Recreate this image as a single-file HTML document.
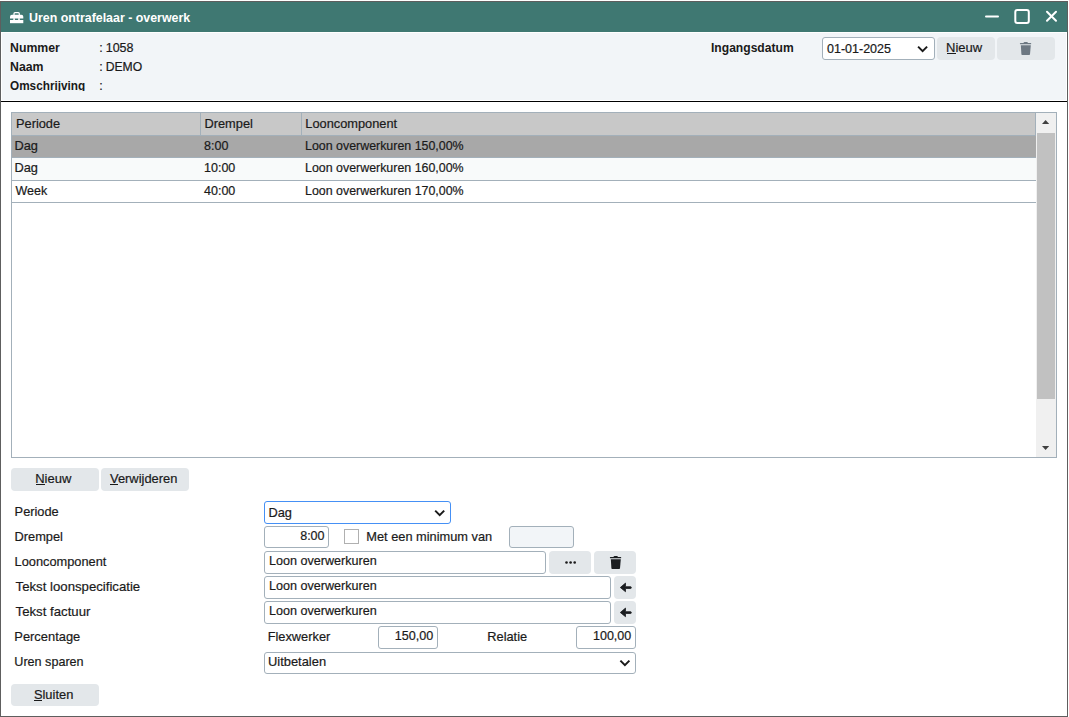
<!DOCTYPE html>
<html><head><meta charset="utf-8">
<style>
html,body{margin:0;padding:0;background:#fff;width:1069px;height:717px;overflow:hidden;}
body{position:relative;font-family:"Liberation Sans",sans-serif;color:#1a1a1a;}
.a{position:absolute;}
.t{position:absolute;white-space:nowrap;font-size:12.8px;line-height:15px;-webkit-text-stroke:0.2px #1a1a1a;}
.b{-webkit-text-stroke:0;}
.b{font-weight:bold;font-size:12.3px;}
#win{left:0;top:1px;width:1068px;height:716px;box-sizing:border-box;border:1px solid #5e5e5e;background:#fff;}
#title{left:1px;top:2px;width:1066px;height:30px;background:#3f7872;}
#hdr{left:1px;top:32px;width:1066px;height:69px;box-sizing:border-box;border:1px solid #fff;background:#f2f5f8;overflow:hidden;}
#hline{left:1px;top:101px;width:1066px;height:1px;background:#000;}
.btn{position:absolute;background:#e3e7ea;border-radius:4px;}
.inp{position:absolute;box-sizing:border-box;border:1px solid #a3b0ba;border-radius:3px;background:#fff;}
u{text-decoration:none;}
.ul{position:absolute;height:1px;background:#1a1a1a;}
</style></head><body>
<div id="win" class="a"></div>
<div id="title" class="a"></div>
<!-- title icon -->
<svg class="a" style="left:10px;top:12px" width="14" height="12" viewBox="0 0 14 12">
  <path d="M3.4 3 V1.6 Q3.4 0 5 0 H8.3 Q9.9 0 9.9 1.6 V3 H8.7 V1.7 Q8.7 1.3 8.3 1.3 H5 Q4.6 1.3 4.6 1.7 V3 Z" fill="#fff"/>
  <path d="M0 4.8 Q0 2.8 2 2.8 H11.3 Q13.3 2.8 13.3 4.8 V6.5 H0 Z" fill="#fff"/>
  <rect x="0" y="8" width="13.3" height="3.2" fill="#fff"/>
  <rect x="3.3" y="6.2" width="1.6" height="2.2" fill="#fff"/>
  <rect x="8.2" y="6.2" width="1.6" height="2.2" fill="#fff"/>
</svg>
<div class="t b" style="left:29px;top:11px;color:#fff;font-size:12.4px;">Uren ontrafelaar - overwerk</div>
<!-- window controls -->
<svg class="a" style="left:980px;top:4px" width="85" height="26" viewBox="0 0 85 26">
  <line x1="6" y1="12.5" x2="18" y2="12.5" stroke="#fff" stroke-width="2" stroke-linecap="round"/>
  <rect x="35.3" y="6" width="13.5" height="13" rx="2" ry="2" fill="none" stroke="#fff" stroke-width="2"/>
  <line x1="67" y1="7.8" x2="76" y2="16.8" stroke="#fff" stroke-width="2" stroke-linecap="round"/>
  <line x1="76" y1="7.8" x2="67" y2="16.8" stroke="#fff" stroke-width="2" stroke-linecap="round"/>
</svg>

<div id="hdr" class="a"></div>
<div class="a" style="left:0;top:33px;width:1066px;height:58px;overflow:hidden;">
  <div class="t b" style="left:10px;top:8px;">Nummer</div>
  <div class="t b" style="left:10px;top:27px;">Naam</div>
  <div class="t b" style="left:10px;top:46px;transform:scaleX(0.957);transform-origin:0 0;">Omschrijving</div>
  <div class="t" style="left:99.2px;top:8px;font-size:12.5px;">:</div>
  <div class="t" style="left:105.7px;top:8px;font-size:12.5px;">1058</div>
  <div class="t" style="left:99.2px;top:27px;font-size:12.5px;">:</div>
  <div class="t" style="left:105.7px;top:27px;font-size:12.2px;">DEMO</div>
  <div class="t" style="left:99.2px;top:46px;font-size:12.5px;">:</div>
</div>
<div class="t b" style="left:711px;top:41px;font-size:12.1px;">Ingangsdatum</div>
<div class="inp" style="left:822px;top:37px;width:113px;height:23px;"></div>
<div class="t" style="left:827px;top:42px;font-size:12.5px;">01-01-2025</div>
<svg class="a" style="left:916px;top:44px" width="14" height="10" viewBox="0 0 14 10"><path d="M2.1 2.6 L6.6 7.1 L11.1 2.6" fill="none" stroke="#1a1a1a" stroke-width="2"/></svg>
<div class="btn" style="left:937px;top:37px;width:58px;height:23px;"></div>
<div class="t" style="left:946px;top:40px;font-size:13px;"><u>N</u>ieuw</div>
<div class="ul" style="left:947px;top:53px;width:9px;"></div>
<div class="btn" style="left:997px;top:37px;width:58px;height:23px;"></div>
<svg class="a" style="left:1019px;top:41px" width="14" height="15" viewBox="0 0 14 15">
  <path d="M4.4 2.2 Q4.6 1 5.6 1 H7.8 Q8.8 1 9 2.2 Z" fill="#6d7882"/>
  <rect x="0.9" y="2" width="11.3" height="1.25" rx="0.6" fill="#6d7882"/>
  <path d="M1.8 4.3 H11.8 L11 13.2 Q10.9 13.9 10.2 13.9 H3.2 Q2.5 13.9 2.4 13.2 Z" fill="#6d7882"/>
</svg>
<div id="hline" class="a"></div>

<!-- table -->
<div class="a" style="left:11px;top:112px;width:1046px;height:346px;box-sizing:border-box;border:1px solid #a3b0ba;background:#fff;"></div>
<div class="a" style="left:12px;top:113px;width:1023px;height:22px;background:#c8c8c8;border-right:1px solid #a3b0ba;border-bottom:1px solid #a3b0ba;"></div>
<div class="a" style="left:200px;top:113px;width:1px;height:22px;background:#a3b0ba;"></div>
<div class="a" style="left:301px;top:113px;width:1px;height:22px;background:#a3b0ba;"></div>
<div class="a" style="left:12px;top:136px;width:1024px;height:22px;background:#a8a8a8;"></div>
<div class="a" style="left:12px;top:157px;width:1024px;height:1px;background:#a3b0ba;"></div>
<div class="a" style="left:12px;top:158px;width:1024px;height:22px;background:#f8fafa;"></div>
<div class="a" style="left:12px;top:180px;width:1024px;height:1px;background:#a3b0ba;"></div>
<div class="a" style="left:12px;top:202px;width:1024px;height:1px;background:#a3b0ba;"></div>
<div class="t" style="left:16px;top:116px;">Periode</div>
<div class="t" style="left:204.5px;top:116px;">Drempel</div>
<div class="t" style="left:305.3px;top:116px;">Looncomponent</div>
<div class="t" style="left:14.5px;top:138px;">Dag</div>
<div class="t" style="left:204px;top:139px;font-size:12.5px;">8:00</div>
<div class="t" style="left:305px;top:139px;font-size:12.42px;">Loon overwerkuren 150,00%</div>
<div class="t" style="left:14.5px;top:160px;">Dag</div>
<div class="t" style="left:204px;top:161px;font-size:12.5px;">10:00</div>
<div class="t" style="left:305px;top:161px;font-size:12.42px;">Loon overwerkuren 160,00%</div>
<div class="t" style="left:15.5px;top:184px;font-size:12.5px;">Week</div>
<div class="t" style="left:204px;top:184px;font-size:12.5px;">40:00</div>
<div class="t" style="left:305px;top:184px;font-size:12.42px;">Loon overwerkuren 170,00%</div>
<!-- scrollbar -->
<div class="a" style="left:1036px;top:113px;width:20px;height:344px;background:#f0f0f0;"></div>
<div class="a" style="left:1037px;top:133px;width:18px;height:266px;background:#c1c1c1;"></div>
<svg class="a" style="left:1041px;top:119px" width="10" height="6" viewBox="0 0 10 6"><path d="M1 5 L4.6 1 L8.2 5 Z" fill="#404040"/></svg>
<svg class="a" style="left:1041px;top:445px" width="10" height="6" viewBox="0 0 10 6"><path d="M1 1 L4.6 5 L8.2 1 Z" fill="#404040"/></svg>

<!-- buttons -->
<div class="btn" style="left:11px;top:468px;width:88px;height:23px;"></div>
<div class="t" style="left:35.2px;top:471px;font-size:13px;"><u>N</u>ieuw</div>
<div class="ul" style="left:36px;top:484px;width:9px;"></div>
<div class="btn" style="left:101px;top:468px;width:88px;height:23px;"></div>
<div class="t" style="left:110px;top:471px;font-size:12.9px;"><u>V</u>erwijderen</div>
<div class="ul" style="left:110px;top:484px;width:8px;"></div>

<!-- form -->
<div class="t" style="left:14.6px;top:504px;">Periode</div>
<div class="t" style="left:14.6px;top:529px;">Drempel</div>
<div class="t" style="left:14.6px;top:554px;">Looncomponent</div>
<div class="t" style="left:15.6px;top:579px;font-size:13.2px;">Tekst loonspecificatie</div>
<div class="t" style="left:15.6px;top:604px;font-size:13.2px;">Tekst factuur</div>
<div class="t" style="left:14.3px;top:629px;font-size:12.9px;">Percentage</div>
<div class="t" style="left:14.3px;top:655px;font-size:12.6px;">Uren sparen</div>

<div class="inp" style="left:264px;top:501px;width:187px;height:23px;border-color:#4590f5;border-radius:3px;"></div>
<div class="t" style="left:268.5px;top:505px;">Dag</div>
<svg class="a" style="left:432px;top:507px" width="14" height="10" viewBox="0 0 14 10"><path d="M3.2 3.6 L7.7 8.1 L12.2 3.6" fill="none" stroke="#1a1a1a" stroke-width="2"/></svg>

<div class="inp" style="left:264px;top:526px;width:65px;height:22px;"></div>
<div class="t" style="left:300.2px;top:529px;font-size:12.5px;">8:00</div>
<div class="a" style="left:344px;top:529px;width:15px;height:15px;box-sizing:border-box;border:1px solid #b0b0b0;background:#fff;"></div>
<div class="t" style="left:366.3px;top:529px;">Met een minimum van</div>
<div class="inp" style="left:509px;top:526px;width:65px;height:22px;background:#f2f5f8;border-color:#a3b0ba;"></div>

<div class="inp" style="left:264px;top:551px;width:282px;height:23px;"></div>
<div class="t" style="left:269px;top:554px;font-size:12.6px;">Loon overwerkuren</div>
<div class="btn" style="left:549px;top:551px;width:42px;height:23px;"></div>
<svg class="a" style="left:564px;top:559px" width="14" height="6" viewBox="0 0 14 6"><circle cx="2.5" cy="3.5" r="1.3" fill="#1a1a1a"/><circle cx="6.6" cy="3.5" r="1.3" fill="#1a1a1a"/><circle cx="10.7" cy="3.5" r="1.3" fill="#1a1a1a"/></svg>
<div class="btn" style="left:594px;top:551px;width:42px;height:23px;"></div>
<svg class="a" style="left:609px;top:555px" width="14" height="15" viewBox="0 0 14 15">
  <path d="M4.4 2.2 Q4.6 1 5.6 1 H7.8 Q8.8 1 9 2.2 Z" fill="#1a1d20"/>
  <rect x="0.9" y="2" width="11.3" height="1.25" rx="0.6" fill="#1a1d20"/>
  <path d="M1.8 4.3 H11.8 L11 13.2 Q10.9 13.9 10.2 13.9 H3.2 Q2.5 13.9 2.4 13.2 Z" fill="#1a1d20"/>
</svg>

<div class="inp" style="left:264px;top:576px;width:347px;height:23px;"></div>
<div class="t" style="left:269px;top:579px;font-size:12.6px;">Loon overwerkuren</div>
<div class="btn" style="left:614px;top:576px;width:22px;height:23px;"></div>
<svg class="a" style="left:619px;top:582px" width="14" height="11" viewBox="0 0 14 11"><path d="M1.3 5.5 L6.5 1.1 V4.7 H11.7 Q12.3 4.7 12.3 5.6 Q12.3 6.5 11.7 6.5 H6.5 V9.7 Z" fill="#1a1d20" stroke="#1a1d20" stroke-width="0.8" stroke-linejoin="round"/></svg>

<div class="inp" style="left:264px;top:601px;width:347px;height:23px;"></div>
<div class="t" style="left:269px;top:604px;font-size:12.6px;">Loon overwerkuren</div>
<div class="btn" style="left:614px;top:601px;width:22px;height:23px;"></div>
<svg class="a" style="left:619px;top:607px" width="14" height="11" viewBox="0 0 14 11"><path d="M1.3 5.5 L6.5 1.1 V4.7 H11.7 Q12.3 4.7 12.3 5.6 Q12.3 6.5 11.7 6.5 H6.5 V9.7 Z" fill="#1a1d20" stroke="#1a1d20" stroke-width="0.8" stroke-linejoin="round"/></svg>

<div class="t" style="left:267.7px;top:629px;">Flexwerker</div>
<div class="inp" style="left:378px;top:626px;width:60px;height:23px;"></div>
<div class="t" style="left:394.8px;top:629px;font-size:12.6px;">150,00</div>
<div class="t" style="left:487.3px;top:629px;">Relatie</div>
<div class="inp" style="left:576px;top:626px;width:60px;height:23px;"></div>
<div class="t" style="left:593px;top:629px;font-size:12.5px;">100,00</div>

<div class="inp" style="left:264px;top:652px;width:372px;height:22px;"></div>
<div class="t" style="left:268px;top:654px;font-size:12.9px;">Uitbetalen</div>
<svg class="a" style="left:617px;top:657px" width="14" height="10" viewBox="0 0 14 10"><path d="M3.4 3.6 L7.9 8.1 L12.4 3.6" fill="none" stroke="#1a1a1a" stroke-width="2"/></svg>

<div class="btn" style="left:11px;top:684px;width:88px;height:22px;"></div>
<div class="t" style="left:33.9px;top:687px;font-size:12.9px;"><u>S</u>luiten</div>
<div class="ul" style="left:34px;top:700px;width:8px;"></div>
</body></html>
